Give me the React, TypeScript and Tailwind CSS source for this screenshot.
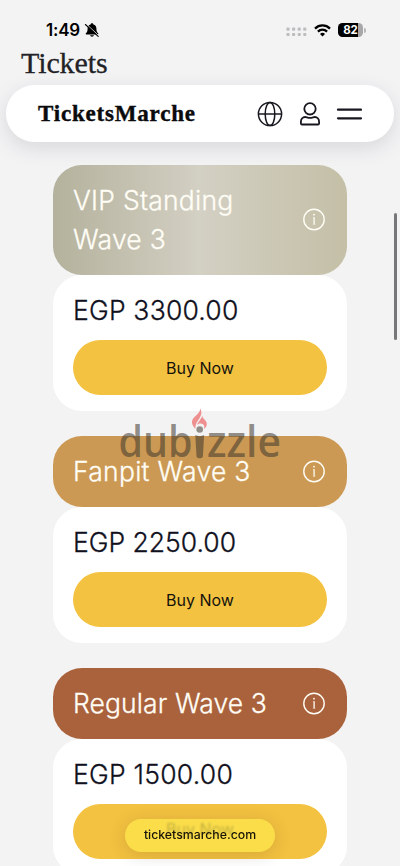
import React from 'react';

interface TicketProps {
  name: string;
  price: string;
  headerClass: string;
  titleClass: string;
  priceClass: string;
  labelClass?: string;
}

const tickets: TicketProps[] = [
  {
    name: 'VIP Standing Wave 3',
    price: 'EGP 3300.00',
    headerClass: 'h-[110px] bg-linear-to-r from-[#b4b19c] via-[#d3d0c4] to-[#c4bfa6]',
    titleClass: 'tracking-[0.25px]',
    priceClass: 'tracking-[0.2px]',
  },
  {
    name: 'Fanpit Wave 3',
    price: 'EGP 2250.00',
    headerClass: 'h-[71px] bg-[#cb9953]',
    titleClass: 'tracking-[0.27px]',
    priceClass: 'tracking-[0px]',
  },
  {
    name: 'Regular Wave 3',
    price: 'EGP 1500.00',
    headerClass: 'h-[71px] bg-[#aa623c]',
    titleClass: 'tracking-[0.1px]',
    priceClass: 'tracking-[0.25px]',
    labelClass: 'relative -top-[3px]',
  },
];

const InfoIcon = () => (
  <svg className="w-6 h-6 shrink-0" viewBox="0 0 24 24" fill="none" stroke="#fffdf5" strokeWidth="1.4">
    <circle cx="12" cy="11.5" r="10.2" />
    <path d="M12.100 9.300v7" strokeWidth="1.300" />
    <path d="M10.900 9.600h1.200M10.900 16.300h2.400" strokeWidth="0.500" />
    <circle cx="12" cy="6.700" r="0.900" fill="#fffdf5" stroke="none" />
  </svg>
);

const StatusBar = () => (
  <div className="flex h-[48px] items-start justify-between pl-[46px] pr-[34px] pt-5 text-black">
    <div className="flex h-5 items-center">
      <span className="w-[36px] whitespace-nowrap text-[17px] font-semibold leading-5 tracking-[-0.2px]">1:49</span>
      <svg className="ml-[2px] h-4 w-4" viewBox="0 0 16 16">
        <path d="M8 1.2c-.8 0-1.3.5-1.4 1.2C4.5 3 3.6 4.5 3.6 6.5c0 2.7-.5 3.7-1.7 4.8-.5.5-.2 1.2.5 1.2h11.2c.7 0 1-.7.5-1.2-1.2-1.1-1.7-2.1-1.7-4.8 0-2-.9-3.500-3-4.100C9.300 1.700 8.800 1.200 8 1.200zM6 13.300c.3.900 1 1.400 2 1.400s1.700-.5 2-1.400z" />
        <path d="M2.100 1.900l12 11.300" stroke="#f3f3f5" strokeWidth="1" />
        <path d="M1.400 2.500l12.800 11.800" stroke="#000" strokeWidth="1.100" strokeLinecap="round" />
      </svg>
    </div>
    <div className="flex h-5 items-center">
      <svg className="mr-[7px] mt-1 h-[10px] w-[21px]" viewBox="0 0 21 10" fill="#bdbdc0">
        {[2, 7.6, 13.2, 18.8].map((x) => (
          <g key={x}>
            <rect x={x - 1.6} y="0.500" width="3.200" height="3.200" rx="1" />
            <rect x={x - 1.6} y="5.900" width="3.200" height="3.200" rx="1" />
          </g>
        ))}
      </svg>
      <svg className="mr-[7px] h-[13px] w-[17px]" viewBox="0 0 17 13" fill="none" stroke="#000">
        <path d="M1 4.600c4.200-4.200 10.800-4.200 15 0" strokeWidth="2.300" />
        <path d="M3.900 7.600c2.600-2.600 6.600-2.600 9.200 0" strokeWidth="2.200" />
        <path d="M8.500 12.400L6 9.900c1.400-1.400 3.600-1.400 5 0z" fill="#000" stroke="none" />
      </svg>
      <div className="flex h-[14px] w-[25px] items-center justify-center rounded-[4.5px] bg-linear-to-r from-black from-82% to-[#a7a7a9] to-82% text-[11.5px] font-bold leading-[14px] text-white">
        <span>82</span>
      </div>
      <div className="ml-[1px] h-[5px] w-[2px] rounded-r-full bg-[#b5b5b8]" />
    </div>
  </div>
);

const Navbar = () => (
  <nav className="relative z-10 mx-[6px] flex h-[57px] items-center rounded-[29px] bg-white pl-8 pr-8 shadow-[0_6px_20px_rgba(40,40,60,0.13)]">
    <span className="font-['Liberation_Serif',serif] text-[23px] font-bold leading-none tracking-[0.8px] text-[#0b0b0d] [-webkit-text-stroke:0.4px_#0b0b0d]">
      TicketsMarche
    </span>
    <div className="ml-auto flex items-center">
      <svg className="h-[26px] w-[26px]" viewBox="0 0 26 26" fill="none" stroke="#17171f" strokeWidth="1.500">
        <circle cx="13" cy="13" r="11.600" />
        <ellipse cx="13" cy="13" rx="4.800" ry="11.600" />
        <path d="M1.400 13h23.200" />
      </svg>
      <svg className="ml-[16px] h-[26px] w-[22px]" viewBox="0 0 22 26" fill="none" stroke="#17171f" strokeWidth="1.800" strokeLinejoin="round">
        <circle cx="11" cy="7.800" r="5.700" />
        <path d="M2.800 23.500h16.400a.9.9 0 0 0 .9-.9v-1.700c0-2.700-1.900-4.900-4.300-4.900-1.300 0-2.500.9-4.800.9s-3.500-.9-4.800-.9c-2.400 0-4.300 2.200-4.300 4.900v1.700c0 .5.4.9.900.9z" />
      </svg>
      <svg className="ml-[15px] h-[14px] w-[26px]" viewBox="0 0 26 14" stroke="#17171f" strokeWidth="2.200" strokeLinecap="round">
        <path d="M2 2.700h23M2 11.300h23" />
      </svg>
    </div>
  </nav>
);

const TicketCard: React.FC<{ ticket: TicketProps }> = ({ ticket }) => (
  <div>
    <div className={`flex items-center justify-between rounded-[29px] pl-5 pr-[21px] ${ticket.headerClass}`}>
      <h2 className={`w-[200px] text-[26.5px] font-light leading-[39px] text-[#fffdf5] [-webkit-text-stroke:0.3px_#fffdf5] ${ticket.titleClass}`}>
        {ticket.name}
      </h2>
      <InfoIcon />
    </div>
    <div className="h-[136px] rounded-[29px] bg-white px-5 pt-4">
      <p className={`text-[26.5px] font-light leading-[39px] text-[#101020] [-webkit-text-stroke:0.3px_#101020] ${ticket.priceClass}`}>
        {ticket.price}
      </p>
      <button className="mt-[10px] h-[55px] w-full rounded-full bg-[#f3c241] text-[16px] text-[#14120c]">
        <span className={ticket.labelClass}>Buy Now</span>
      </button>
    </div>
  </div>
);

const Watermark = () => (
  <svg className="pointer-events-none absolute left-[118px] top-[403px] h-[62px] w-[166px]" viewBox="0 0 166 62">
    <g fill="#3a342c" fillOpacity="0.53" fontFamily="'Open Sans', sans-serif" fontWeight="600" fontSize="43.5">
      <text x="0.500" y="54" textLength="74" lengthAdjust="spacingAndGlyphs">dub</text>
      <text x="89" y="54" textLength="74" lengthAdjust="spacingAndGlyphs">zzle</text>
      <circle cx="81.700" cy="26.500" r="3.300" />
      <path d="M77.300 32c2.600 1.500 6.200 1.500 8.800 0l-1.200 21.500c-.2 2.400-6.200 2.400-6.400 0z" />
    </g>
    <path d="M77.500 26c-5-5-4.500-9.500.3-13.200 2.800-2.300 4.300-4.500 4.500-7.300 1.700 3.200 1.500 6-.7 9.400-2.500 3.800-4.600 6.500-4.100 11.100z" fill="#ee8585" fillOpacity="0.900" />
    <path d="M86 26c1.200-3.800-1-5.200-3.200-5.500-1.700-.2-2.800.4-3.600 1.500.4-3.100 4-5.200 5-9.200.3 2.900 3.800 4.100 4.500 7.200.5 2.500-.8 4.500-2.700 6z" fill="#ee8585" fillOpacity="0.900" />
  </svg>
);

export default function App() {
  return (
    <div className="relative h-[866px] w-[400px] overflow-hidden bg-[#f3f3f4] font-['Inter',sans-serif]">
      <StatusBar />
      <h1 className="h-[37px] pl-[21px] font-['Liberation_Serif',serif] text-[30px] leading-[30px] tracking-[-0.1px] text-[#222226] [-webkit-text-stroke:0.3px_#222226]">
        Tickets
      </h1>
      <Navbar />
      <main className="mt-[23px] flex flex-col gap-[25px] px-[53px]">
        {tickets.map((ticket) => (
          <TicketCard key={ticket.name} ticket={ticket} />
        ))}
      </main>
      <Watermark />
      <div className="absolute right-[3px] top-[213px] h-[127px] w-[3px] rounded-full bg-[#777779]" />
      {/* address pill floating over the page */}
      <div className="absolute left-[125px] top-[819px] flex h-[33px] w-[150px] items-center justify-center rounded-full bg-[#fde54e]/75 text-[12.3px] font-medium text-[#171407] shadow-[0_3px_18px_rgba(60,40,0,0.16)] backdrop-blur-[1px]">
        ticketsmarche.com
      </div>
    </div>
  );
}
